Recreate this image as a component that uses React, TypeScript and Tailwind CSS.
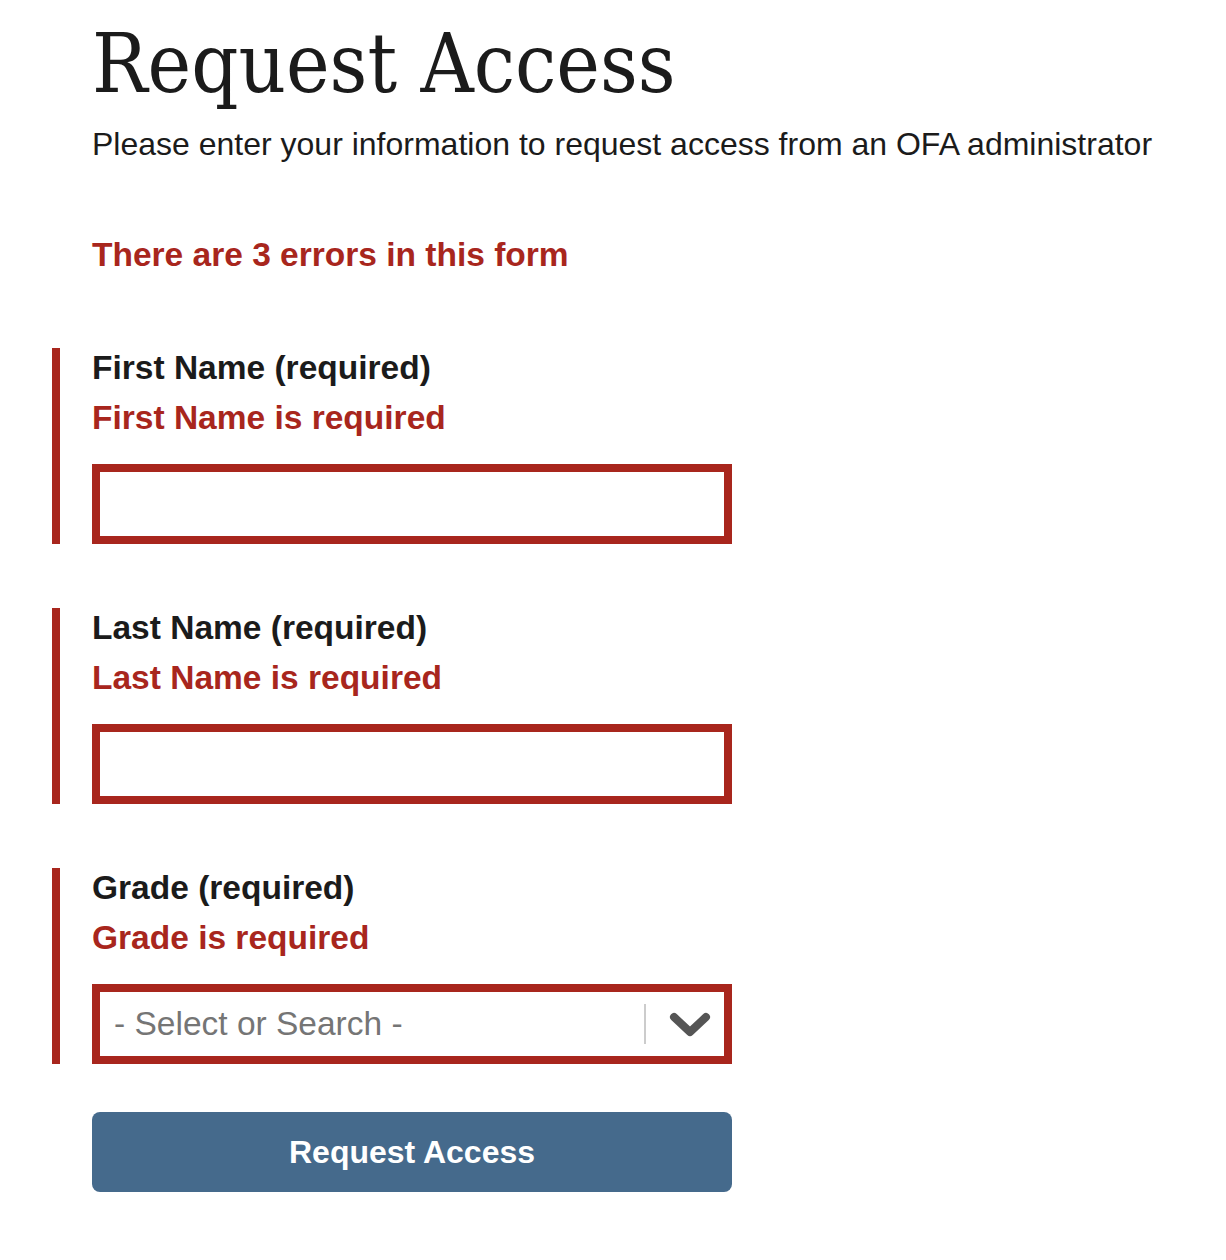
import React from "react";

const sans = { fontFamily: '"Liberation Sans", Arial, sans-serif' };

function Group({ label, error, children }: { label: string; error: string; children: React.ReactNode }) {
  return (
    <div className="-ml-[40px] border-l-[8px] border-[#a8261d] pl-[32px]">
      <div className="text-[33.5px] font-bold leading-[40px] text-[#1b1b1b]">{label}</div>
      <div className="mt-[6px] text-[33.5px] font-bold leading-[48px] text-[#a8261d]">{error}</div>
      <div className="mt-[22px]">{children}</div>
    </div>
  );
}

function TextBox() {
  return <div className="h-[80px] w-[640px] border-[8px] border-[#a8261d] bg-white" />;
}

function SelectBox() {
  return (
    <div className="flex h-[80px] w-[640px] items-center border-[8px] border-[#a8261d] bg-white">
      <div className="flex-1 pl-[14px] text-[33.5px] text-[#757575]">- Select or Search -</div>
      <div className="h-[40px] w-[2px] bg-[#cccccc]" />
      <div className="flex w-[78px] items-center justify-start pl-[23px]">
        <svg width="42" height="30" viewBox="0 0 42 30">
          <path d="M5 8 L21 23 L37 8" fill="none" stroke="#555555" strokeWidth="8" strokeLinecap="round" strokeLinejoin="round" />
        </svg>
      </div>
    </div>
  );
}

export default function App() {
  return (
    <div className="min-h-[1260px] bg-white" style={sans}>
      <div className="pl-[92px] pt-[14px]">
        <h1
          className="text-[82px] leading-[100px] text-[#1b1b1b]"
          style={{ fontFamily: '"DejaVu Serif Condensed", "Liberation Serif", serif' }}
        >
          Request Access
        </h1>
        <p className="mt-[10px] text-[32px] leading-[40px] text-[#1b1b1b]">
          Please enter your information to request access from an OFA administrator
        </p>
        <div className="mt-[67px] text-[33.5px] font-bold leading-[48px] text-[#a8261d]">
          There are 3 errors in this form
        </div>
        <div className="mt-[69px] flex flex-col gap-[64px]">
          <Group label="First Name (required)" error="First Name is required">
            <TextBox />
          </Group>
          <Group label="Last Name (required)" error="Last Name is required">
            <TextBox />
          </Group>
          <Group label="Grade (required)" error="Grade is required">
            <SelectBox />
          </Group>
        </div>
        <button className="mt-[48px] flex h-[80px] w-[640px] items-center justify-center rounded-[8px] bg-[#456a8c] text-[32px] font-bold text-white">
          Request Access
        </button>
      </div>
    </div>
  );
}
